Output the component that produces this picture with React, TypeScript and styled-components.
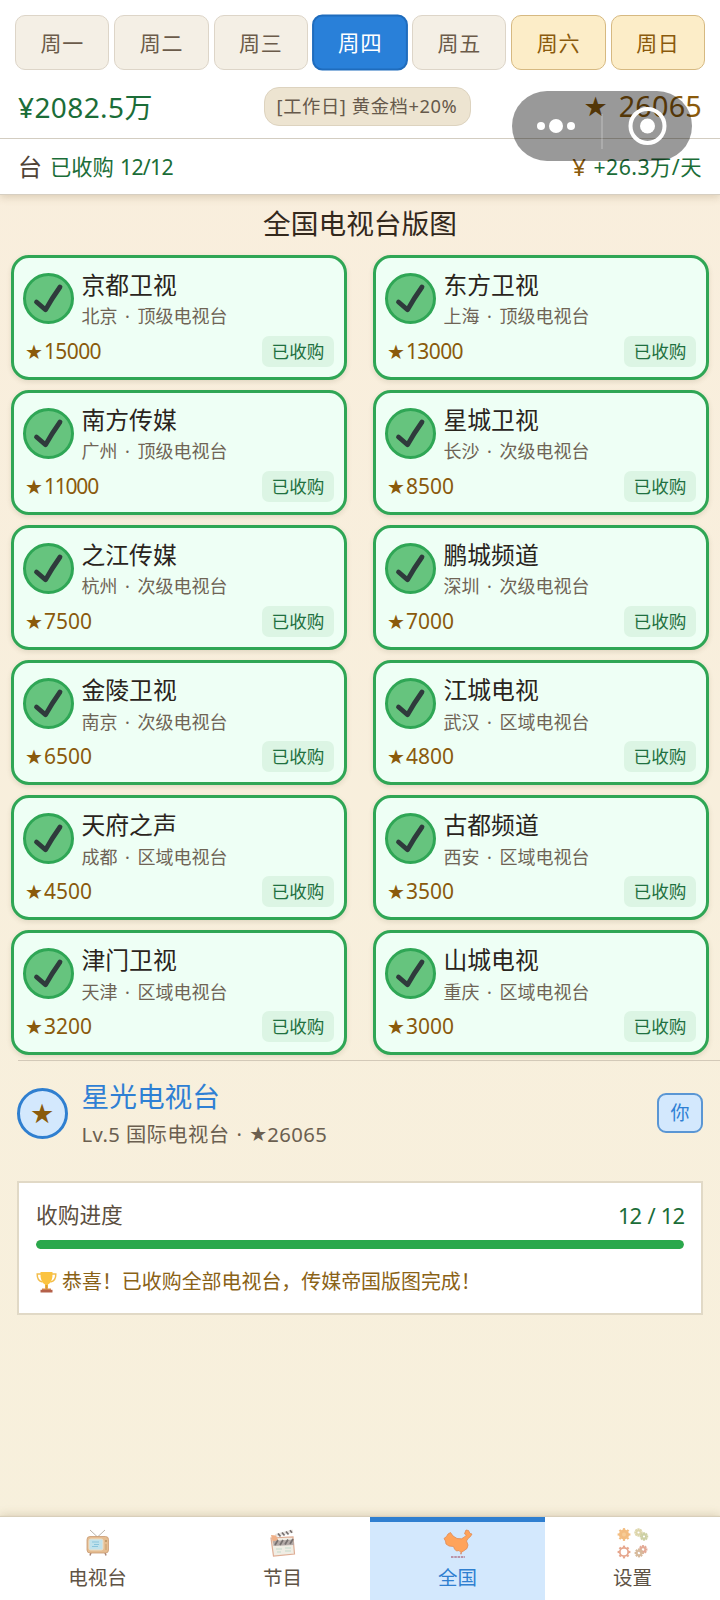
import React from "react";
import styled, { createGlobalStyle } from "styled-components";

const GlobalStyle = createGlobalStyle`
  * { box-sizing: border-box; }
  body {
    margin: 0;
    background: #f9efdd;
    font-family: "Noto Sans", "Noto Sans CJK SC", sans-serif;
    line-height: 1;
    -webkit-font-smoothing: antialiased;
  }
`;

const Screen = styled.div`
  position: relative;
  display: flex;
  flex-direction: column;
  width: 720px;
  height: 1600px;
  overflow: hidden;
  background: linear-gradient(#f9eedd, #f7f0dc);
`;

const Header = styled.header`
  flex: none;
  height: 195px;
  background: #fff;
  border-bottom: 1px solid #d6cfc2;
  box-shadow: 0 2px 8px rgba(120, 90, 50, 0.24);
`;

const DayTabs = styled.nav`
  display: grid;
  grid-template-columns: repeat(7, 1fr);
  gap: 5px;
  height: 71px;
  padding: 15px 15px 1px;
`;

type DayKind = "plain" | "active" | "weekend";
const dayColors = {
  plain: ["#f4efe5", "#ddd5c8", "#6b5b4a"],
  active: ["#2980d9", "#1f6cbd", "#ffffff"],
  weekend: ["#fcedc8", "#d6b981", "#8a5a0c"],
};

const DayTab = styled.button<{ $kind: DayKind }>`
  height: 55px;
  padding: 0 0 2px;
  border: ${(p) => (p.$kind === "active" ? 2 : 1)}px solid ${(p) => dayColors[p.$kind][1]};
  border-radius: 10px;
  background: ${(p) => dayColors[p.$kind][0]};
  color: ${(p) => dayColors[p.$kind][2]};
  font: 21px "Noto Sans", "Noto Sans CJK SC", sans-serif;
  letter-spacing: 0.7px;
  transform: scale(${(p) => (p.$kind === "active" ? 1.02 : 1)});
`;

const StatusRow = styled.div`
  display: grid;
  grid-template-columns: 1fr 207px 1fr;
  align-items: center;
  height: 68px;
  padding: 4px 18px 0 32px;
  border-bottom: 1px solid #d3cdc1;
`;

const Money = styled.div`
  margin-left: -14px;
  color: #1b6d38;
  font-size: 28px;
  letter-spacing: 0.4px;
`;

const DayPill = styled.div`
  display: flex;
  align-items: center;
  justify-content: center;
  height: 39px;
  border: 1px solid #ddd3bf;
  border-radius: 15px;
  background: #ede4d1;
  color: #66594b;
  font-size: 18.3px;
  letter-spacing: 0.6px;
  white-space: pre;
`;

const Fame = styled.div`
  display: flex;
  align-items: center;
  justify-content: flex-end;
  gap: 11px;
  color: #8a5a0c;
  font-size: 28.8px;
  letter-spacing: 0.2px;
`;

const Star = styled.span<{ $size: number }>`
  font-family: "DejaVu Sans", sans-serif;
  font-size: ${(p) => p.$size}px;
  letter-spacing: 0;
`;

const SummaryRow = styled.div`
  display: flex;
  align-items: center;
  height: 55px;
  padding: 1px 18px 0;
  color: #1b6d38;
  font-size: 21.3px;
`;

const Tight = styled.span`
  margin-left: 6px;
  letter-spacing: -0.7px;
`;

const SummaryIcon = styled.span<{ $tone: string; $gap: number }>`
  margin-right: ${(p) => p.$gap}px;
  color: ${(p) => p.$tone};
  font-size: 24px;
`;

const SummaryEnd = styled.div`
  display: flex;
  align-items: center;
  margin-left: auto;
  letter-spacing: 0.45px;
`;

const Title = styled.h1`
  margin: 0;
  padding-top: 13px;
  height: 59.5px;
  color: #33281c;
  font-size: 27.7px;
  font-weight: 400;
  line-height: 30px;
  text-align: center;
`;

const StationGrid = styled.section`
  display: grid;
  grid-template-columns: 336px 336px;
  grid-auto-rows: 125.5px;
  column-gap: 26px;
  row-gap: 9.6px;
  padding-left: 11px;
`;

const StationCard = styled.article`
  padding: 15.5px 10px 0 9px;
  border: 3px solid #2fa655;
  border-radius: 18px;
  background: #eefff5;
  box-shadow: 0 2px 5px rgba(90, 80, 40, 0.14);
`;

const StationTop = styled.div`
  display: flex;
  height: 63.5px;
`;

const CheckBadge = styled.svg`
  flex: none;
  width: 51px;
  height: 51px;
  margin-right: 7.5px;
`;

const StationName = styled.div`
  height: 24px;
  margin-top: -0.5px;
  color: #2a241c;
  font-size: 23.8px;
  line-height: 24px;
`;

const StationSub = styled.div`
  margin-top: 10.8px;
  color: #6f6455;
  font-size: 18px;
  line-height: 18px;
  white-space: pre;
`;

const Separator = styled.span`
  display: inline-block;
  width: 20px;
  text-align: center;
`;

const StationBottom = styled.div`
  display: flex;
  align-items: center;
  justify-content: space-between;
  height: 30px;
  padding-left: 2px;
`;

const StationFame = styled.div`
  display: flex;
  align-items: center;
  gap: 1px;
  color: #8a5a0c;
  font-size: 21px;
`;

const FameValue = styled.span<{ $ones: number }>`
  letter-spacing: ${(p) => -0.6 * p.$ones}px;
`;

const OwnedTag = styled.span`
  width: 72px;
  height: 31px;
  border-radius: 7px;
  background: #dcf5e4;
  color: #1f7040;
  font-size: 17.6px;
  line-height: 30px;
  text-align: center;
`;

const PlayerRow = styled.section`
  display: flex;
  height: 121px;
  margin: 4.3px 0 0 18px;
  padding-top: 27px;
  border-top: 1px solid #d3c9b8;
`;

const PlayerAvatar = styled.div`
  display: flex;
  align-items: center;
  justify-content: center;
  width: 51px;
  height: 51px;
  margin-left: -1.5px;
  border: 3px solid #2f7fd0;
  border-radius: 50%;
  background: #d3e8fd;
  color: #8a5a0c;
`;

const PlayerInfo = styled.div`
  flex: 1;
  margin: -6px 0 0 14px;
`;

const PlayerName = styled.div`
  color: #2f80d4;
  font-size: 27.7px;
  line-height: 28px;
`;

const PlayerSub = styled.div`
  display: flex;
  align-items: center;
  margin-top: 14.5px;
  color: #6b5f50;
  font-size: 20.3px;
  letter-spacing: 0.4px;
  white-space: pre;
`;

const YouTag = styled.div`
  width: 46px;
  height: 40px;
  margin: 5px 17px 0 0;
  border: 2px solid #5a96d4;
  border-radius: 9px;
  background: #d3e8fd;
  color: #2f80d4;
  font-size: 19px;
  line-height: 36px;
  text-align: center;
`;

const ProgressPanel = styled.section`
  width: 686px;
  height: 134px;
  margin-left: 17px;
  padding: 19px 17px 0;
  border: 2px solid #e1d9c6;
  background: #fff;
`;

const ProgressHead = styled.div`
  display: flex;
  justify-content: space-between;
  height: 38.5px;
  color: #5b4e40;
  font-size: 21.7px;
  line-height: 26px;
`;

const ProgressCount = styled.span`
  color: #1b6d38;
  font-size: 22px;
  letter-spacing: -1px;
  word-spacing: 1.5px;
`;

const ProgressTrack = styled.div`
  height: 9px;
  border-radius: 5px;
  background: #e8e0cf;
  overflow: hidden;
`;

const ProgressFill = styled.div`
  height: 100%;
  border-radius: 5px;
  background: #2aa84c;
`;

const Congrats = styled.div`
  display: flex;
  align-items: center;
  gap: 5px;
  margin-top: 21.5px;
  color: #8a6216;
  font-size: 19.95px;
  line-height: 22px;
`;

const BottomNav = styled.nav`
  display: grid;
  grid-template-columns: 195px 175px 175px 175px;
  height: 83.5px;
  margin-top: auto;
  background: #fff;
  box-shadow: 0 -1px 1px #d8cfba, 0 -2px 9px rgba(120, 90, 50, 0.22);
`;

const NavItem = styled.a<{ $active?: boolean }>`
  display: flex;
  flex-direction: column;
  align-items: center;
  padding-top: ${(p) => (p.$active ? 5 : 10)}px;
  border-top: ${(p) => (p.$active ? "5px solid #2f7fd0" : "none")};
  background: ${(p) => (p.$active ? "#d3e8fd" : "#fff")};
  color: ${(p) => (p.$active ? "#2f7fd0" : "#5f5345")};
  font-size: 19.5px;
`;

const NavIcon = styled.svg`
  width: 34px;
  height: 34px;
  margin-bottom: 7.5px;
`;

const Capsule = styled.svg`
  position: absolute;
  left: 512px;
  top: 91px;
  width: 180px;
  height: 70px;
`;

const days: { label: string; kind: DayKind }[] = [
  { label: "周一", kind: "plain" },
  { label: "周二", kind: "plain" },
  { label: "周三", kind: "plain" },
  { label: "周四", kind: "active" },
  { label: "周五", kind: "plain" },
  { label: "周六", kind: "weekend" },
  { label: "周日", kind: "weekend" },
];

const stations = [
  ["京都卫视", "北京", "顶级电视台", 15000],
  ["东方卫视", "上海", "顶级电视台", 13000],
  ["南方传媒", "广州", "顶级电视台", 11000],
  ["星城卫视", "长沙", "次级电视台", 8500],
  ["之江传媒", "杭州", "次级电视台", 7500],
  ["鹏城频道", "深圳", "次级电视台", 7000],
  ["金陵卫视", "南京", "次级电视台", 6500],
  ["江城电视", "武汉", "区域电视台", 4800],
  ["天府之声", "成都", "区域电视台", 4500],
  ["古都频道", "西安", "区域电视台", 3500],
  ["津门卫视", "天津", "区域电视台", 3200],
  ["山城电视", "重庆", "区域电视台", 3000],
] as const;

const Check = () => (
  <CheckBadge viewBox="0 0 51 51">
    <circle cx="25.5" cy="25.5" r="24" fill="#66c47e" stroke="#2fa655" strokeWidth="3" />
    <path d="M13.5 29 L22.5 36.8 Q28.500 26 37 14" fill="none" stroke="#2f3a3c" strokeWidth="4.800" strokeLinecap="round" strokeLinejoin="round" />
  </CheckBadge>
);

const Trophy = () => (
  <svg width="21" height="22" viewBox="0 0 21 22">
    <path d="M5 3H1.2Q1 10 6.5 11M16 3h3.8Q20 10 14.5 11" fill="none" stroke="#f3bd4b" strokeWidth="1.5" />
    <path d="M4.5 1h12Q17 11 12 13.5v4H9v-4Q4 11 4.5 1Z" fill="#fbc340" />
    <path d="M9.5 14h2v4h-2z" fill="#dc9a35" />
    <path d="M6 17.5h9v1.5H6z" fill="#d98b4a" />
    <path d="M4.5 18.8h12V21.5h-12z" fill="#b4604a" />
  </svg>
);

const TvIcon = () => (
  <NavIcon viewBox="0 0 34 34">
    <path d="M9 3l7.5 7 7.5-7" fill="none" stroke="#bab3aa" strokeWidth="1" />
    <path d="M10 25.5l-1 3M24 25.5l1 3" stroke="#a8877a" strokeWidth="1.5" />
    <rect x="6" y="9.5" width="21.5" height="16.5" rx="3" fill="#e5bd91" stroke="#c99a72" strokeWidth="0.8" />
    <rect x="8" y="12" width="14" height="11" rx="1.5" fill="#c0e2ec" stroke="#eedfc6" />
    <path d="M11 15h7m-5 2.5h5m-7 2h6" stroke="#8ac5dc" strokeWidth="1" />
    <circle cx="25" cy="14" r="1" fill="#b79260" />
    <path d="M24 18h2M24 20h2M24 22h2" stroke="#b79260" strokeWidth="0.7" />
  </NavIcon>
);

const ClapperIcon = () => (
  <NavIcon viewBox="0 0 34 34">
    <path d="M9 7l17.5-4.5 .8 3L10 10z" fill="#e9e5e2" />
    <path d="M12 6.5l2.5 3M16 5.5l2.5 3M20 4.5l2.5 3M24 3.3l2 2.5" stroke="#77706f" strokeWidth="1.7" />
    <path d="M5 11l22-1 1.5 17-21 2z" fill="#f0ede4" stroke="#dfad94" strokeWidth="1.2" />
    <path d="M5 8l5 .5 2 4-5 4z" fill="#efb088" />
    <path d="M7 14l20.5-1.5.4 5.5L7.5 19z" fill="#b3aaa7" />
    <path d="M9 18l3-5M14 18l3-5M19 17.5l3-5M24 17l3-5" stroke="#777170" strokeWidth="1.7" />
    <path d="M10 22h6m3-1h6m-14 4h4m4-1h6" stroke="#c3dacb" strokeWidth="1" />
  </NavIcon>
);

const MapIcon = () => (
  <NavIcon viewBox="0 0 34 34">
    <path d="M3 11.500L5.500 9.500L7 7L9.500 5.500L12 9L16 11.500L20.500 11.800L23.500 10L25.500 8L23.500 6.800L25 3L27.500 3.500L29 6.500L31 7L29.500 9.500L27 11.500L25.500 14L27 18L26 21.500L22.500 24L20 25.500L18 23.500L15.500 24L13.500 22L12.500 19.500L8 19L5 17L4.500 14Z" fill="#ffa35a" stroke="#e08a55" strokeWidth="0.800" strokeLinejoin="round" />
    <path d="M20 25.500v1.800" stroke="#d67c52" strokeWidth="1.300" />
    <path d="M10 30h14" stroke="#b993a8" strokeWidth="1.800" strokeDasharray="2.500 0.800" />
  </NavIcon>
);

const Gear = ({ x, y, r, tone, solid }: { x: number; y: number; r: number; tone: string; solid?: boolean }) => (
  <g transform={`translate(${x} ${y})`} stroke={tone} fill={solid ? tone : "none"}>
    <circle r={r - 1.8} strokeWidth="1.8" />
    {[0, 45, 90, 135, 180, 225, 270, 315].map((a) => (
      <path key={a} d={`M0 ${-r + 1.5}V${-r - 0.4}`} strokeWidth="2.2" transform={`rotate(${a})`} />
    ))}
  </g>
);

const GearsIcon = () => (
  <NavIcon viewBox="0 0 34 34">
    <Gear x={8} y={7.5} r={6} tone="#f3bd80" solid />
    <circle cx="8" cy="7.5" r="2" fill="#f7cc95" />
    <Gear x={22.5} y={5.5} r={3.8} tone="#ddd6ac" />
    <Gear x={28} y={9.5} r={3.8} tone="#cdd0a4" />
    <Gear x={8} y={25} r={6} tone="#e6a68d" />
    <Gear x={27} y={22.5} r={4} tone="#e3aa96" />
    <Gear x={23} y={26} r={4} tone="#d7ba9c" />
  </NavIcon>
);

const navItems = [
  { label: "电视台", Icon: TvIcon },
  { label: "节目", Icon: ClapperIcon },
  { label: "全国", Icon: MapIcon, active: true },
  { label: "设置", Icon: GearsIcon },
];

const countOnes = (value: number) => String(value).split("1").length - 1;

export default function App() {
  return (
    <Screen>
      <GlobalStyle />
      <Header>
        <DayTabs>
          {days.map((d) => (
            <DayTab key={d.label} $kind={d.kind}>{d.label}</DayTab>
          ))}
        </DayTabs>
        <StatusRow>
          <Money>¥2082.5万</Money>
          <DayPill>[工作日] 黄金档+20%</DayPill>
          <Fame><Star $size={27}>★</Star>26065</Fame>
        </StatusRow>
        <SummaryRow>
          <SummaryIcon $tone="#4f4337" $gap={8}>台</SummaryIcon>
          已收购<Tight>12/12</Tight>
          <SummaryEnd>
            <SummaryIcon $tone="#8a5a0c" $gap={7}>¥</SummaryIcon>
            +26.3万/天
          </SummaryEnd>
        </SummaryRow>
      </Header>

      <Title>全国电视台版图</Title>
      <StationGrid>
        {stations.map(([name, city, tier, fame]) => (
          <StationCard key={name}>
            <StationTop>
              <Check />
              <div>
                <StationName>{name}</StationName>
                <StationSub>{city}<Separator>·</Separator>{tier}</StationSub>
              </div>
            </StationTop>
            <StationBottom>
              <StationFame>
                <Star $size={20}>★</Star>
                <FameValue $ones={countOnes(fame)}>{fame}</FameValue>
              </StationFame>
              <OwnedTag>已收购</OwnedTag>
            </StationBottom>
          </StationCard>
        ))}
      </StationGrid>

      <PlayerRow>
        <PlayerAvatar><Star $size={27}>★</Star></PlayerAvatar>
        <PlayerInfo>
          <PlayerName>星光电视台</PlayerName>
          <PlayerSub>Lv.5 国际电视台<Separator>·</Separator> <Star $size={20}>★</Star>26065</PlayerSub>
        </PlayerInfo>
        <YouTag>你</YouTag>
      </PlayerRow>

      <ProgressPanel>
        <ProgressHead>
          <span>收购进度</span>
          <ProgressCount>12 / 12</ProgressCount>
        </ProgressHead>
        <ProgressTrack><ProgressFill style={{ width: `${(12 / 12) * 100}%` }} /></ProgressTrack>
        <Congrats><Trophy />恭喜！已收购全部电视台，传媒帝国版图完成！</Congrats>
      </ProgressPanel>

      <BottomNav>
        {navItems.map(({ label, Icon, active }) => (
          <NavItem key={label} $active={active}><Icon />{label}</NavItem>
        ))}
      </BottomNav>

      <Capsule viewBox="0 0 180 70">
        <rect width="180" height="70" rx="35" fill="#000" fillOpacity="0.4" />
        <g fill="#fff">
          <circle cx="29" cy="35" r="4" />
          <circle cx="44" cy="35" r="7" />
          <circle cx="59" cy="35" r="4" />
          <circle cx="135.5" cy="35" r="7.5" />
        </g>
        <circle cx="135.5" cy="35" r="17" fill="none" stroke="#fff" strokeWidth="4" />
        <path d="M90 23v35" stroke="#fff" strokeOpacity="0.25" strokeWidth="1.5" />
      </Capsule>
    </Screen>
  );
}
